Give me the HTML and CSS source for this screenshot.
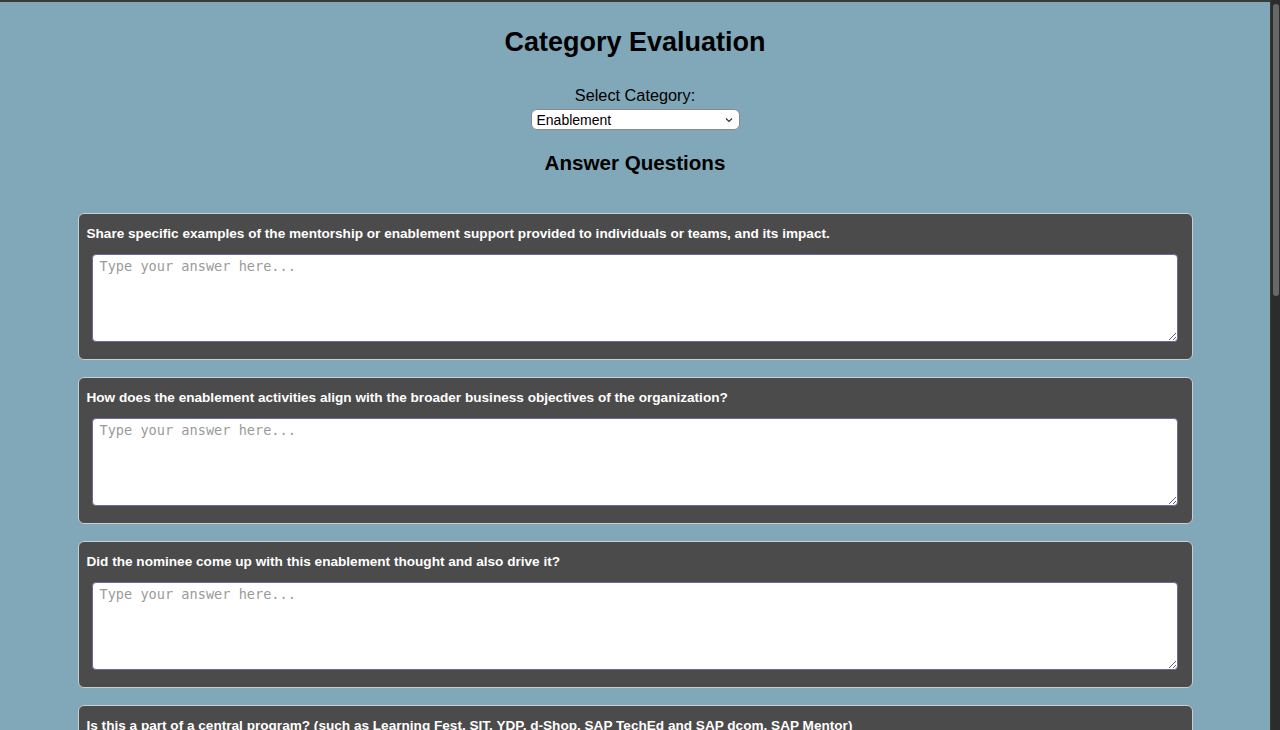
FILE: index.html
```html
<!DOCTYPE html>
<html lang="en">
<head>
<meta charset="utf-8">
<title>Category Evaluation</title>
<link rel="stylesheet" href="styles.css">
</head>
<body>
<div class="scrollbar"><div class="scroll-thumb"></div></div>
<div class="page">
  <h1 class="title">Category Evaluation</h1>
  <div class="selector">
    <label class="select-label" for="category">Select Category:</label>
    <div class="select-wrap">
      <select id="category" class="select">
        <option>Enablement</option>
        <option>Innovation</option>
        <option>Customer Success</option>
      </select>
      <svg class="chevron" width="8" height="6" viewBox="0 0 8 6"><path d="M1 1.5 L4 4.5 L7 1.5" fill="none" stroke="#333" stroke-width="1.2"/></svg>
    </div>
  </div>
  <h2 class="subtitle">Answer Questions</h2>
  <div class="questions">
    <div class="card">
      <p class="question">Share specific examples of the mentorship or enablement support provided to individuals or teams, and its impact.</p>
      <textarea class="answer" placeholder="Type your answer here..."></textarea>
    </div>
    <div class="card">
      <p class="question">How does the enablement activities align with the broader business objectives of the organization?</p>
      <textarea class="answer" placeholder="Type your answer here..."></textarea>
    </div>
    <div class="card">
      <p class="question">Did the nominee come up with this enablement thought and also drive it?</p>
      <textarea class="answer" placeholder="Type your answer here..."></textarea>
    </div>
    <div class="card">
      <p class="question">Is this a part of a central program? (such as Learning Fest, SIT, YDP, d-Shop, SAP TechEd and SAP dcom, SAP Mentor)</p>
      <textarea class="answer" placeholder="Type your answer here..."></textarea>
    </div>
    <div class="card">
      <p class="question">How many colleagues benefited from the enablement activities?</p>
      <textarea class="answer" placeholder="Type your answer here..."></textarea>
    </div>
    <div class="card">
      <p class="question">What feedback was received from the participants?</p>
      <textarea class="answer" placeholder="Type your answer here..."></textarea>
    </div>
    <div class="card">
      <p class="question">How was the success of the enablement measured?</p>
      <textarea class="answer" placeholder="Type your answer here..."></textarea>
    </div>
    <div class="card">
      <p class="question">Is the enablement content reusable by other teams?</p>
      <textarea class="answer" placeholder="Type your answer here..."></textarea>
    </div>
    <div class="card">
      <p class="question">Any additional information you would like to share?</p>
      <textarea class="answer" placeholder="Type your answer here..."></textarea>
    </div>
  </div>
</div>
</body>
</html>
```
FILE: styles.css
```css
html {
  background: #80a8b8;
}
body {
  margin: 0;
  padding-right: 10px;
  border-top: 2px solid #3b3b3b;
  font-family: "Liberation Sans", Arial, sans-serif;
  color: #000;
  background: #80a8b8;
}
.scrollbar {
  position: fixed;
  top: 0;
  right: 0;
  width: 10px;
  height: 100%;
  background: #2c2c2c;
  border-left: 1px solid #3a3a3a;
  box-sizing: border-box;
  z-index: 5;
}
.scroll-thumb {
  margin: 4px 1px 0 2px;
  height: 292px;
  background: #686868;
  border-radius: 4px;
}
.page {
  width: 1115px;
  margin: 0 auto;
  padding: 25px 0 30px;
}
.title {
  margin: 0;
  text-align: center;
  font-size: 27px;
  line-height: 31px;
  font-weight: bold;
}
.selector {
  margin-top: 28px;
  display: flex;
  flex-direction: column;
  align-items: center;
  gap: 5px;
}
.select-label {
  font-size: 16.3px;
  line-height: 18px;
}
.select-wrap {
  position: relative;
  width: 209px;
  height: 21px;
}
.select {
  appearance: none;
  -webkit-appearance: none;
  width: 209px;
  height: 21px;
  box-sizing: border-box;
  border: 1px solid #8a8a8a;
  border-radius: 6px;
  background: #fff;
  font-family: "Liberation Sans", Arial, sans-serif;
  font-size: 14px;
  padding: 0 0 0 5px;
  color: #000;
}
.chevron {
  position: absolute;
  right: 7px;
  top: 8px;
  pointer-events: none;
}
.subtitle {
  margin: 21px 0 0;
  text-align: center;
  font-size: 20.6px;
  line-height: 23px;
  font-weight: bold;
}
.questions {
  margin-top: 39px;
  display: flex;
  flex-direction: column;
  gap: 17px;
}
.card {
  background: #4b4b4b;
  border: 1px solid #c9cfd2;
  border-radius: 6px;
  padding: 11px 14px 17px 8px;
  display: flex;
  flex-direction: column;
}
.question {
  margin: 0;
  color: #fff;
  font-size: 13.6px;
  line-height: 18px;
  font-weight: bold;
}
.answer {
  margin: 11px 0 0 5px;
  height: 88px;
  box-sizing: border-box;
  border: 1px solid #6a6aa0;
  border-radius: 4px;
  background: #fff;
  padding: 3px 7px;
  font-family: "DejaVu Sans Mono", "Liberation Mono", monospace;
  font-size: 13.6px;
  line-height: 17px;
  resize: vertical;
}
.answer::placeholder {
  color: #9a9a9a;
}
```
